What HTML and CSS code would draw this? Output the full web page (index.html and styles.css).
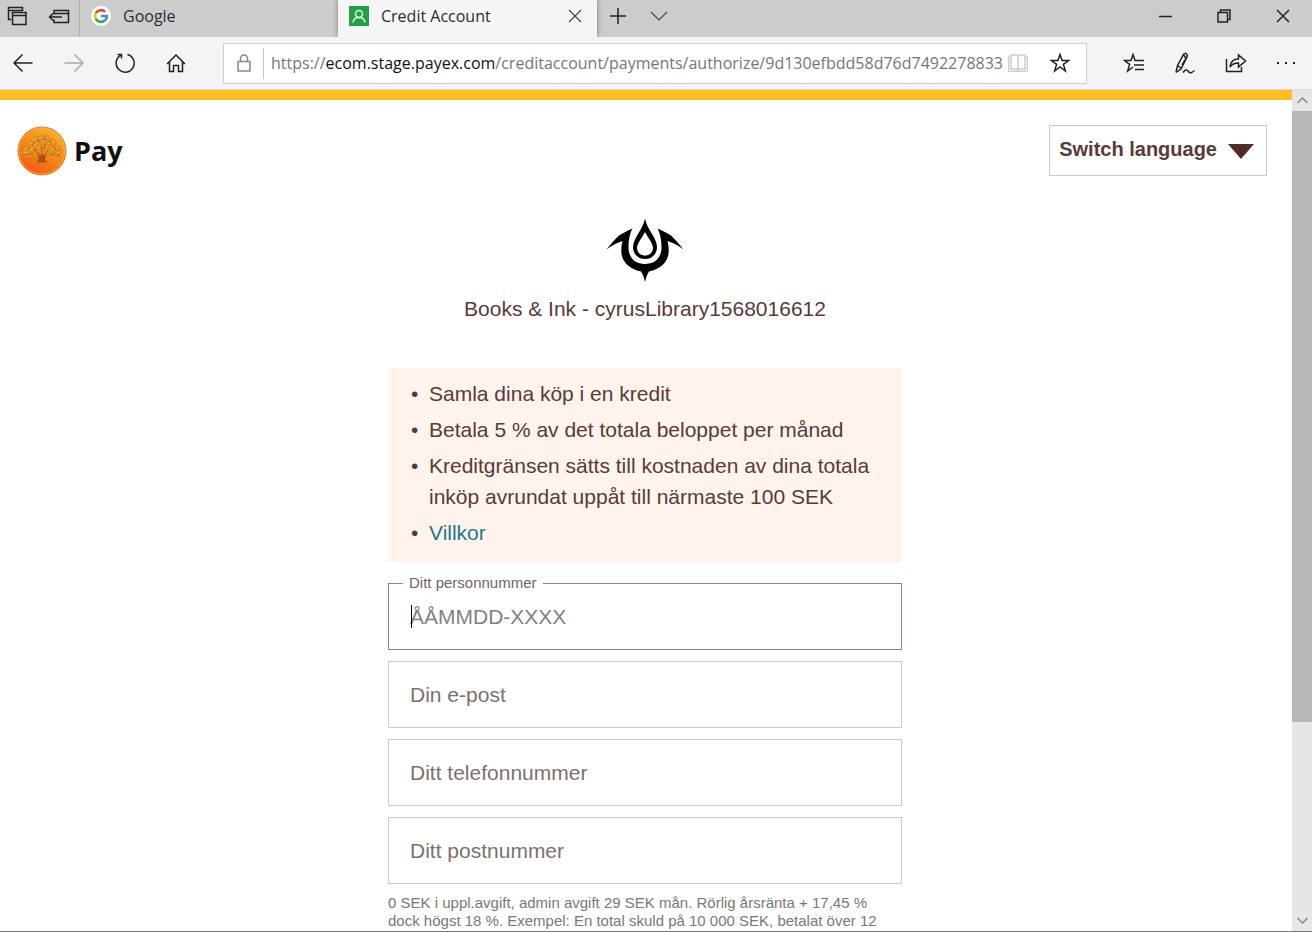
FILE: index.html
```html
<!DOCTYPE html>
<html lang="sv">
<head>
<meta charset="utf-8">
<meta name="viewport" content="width=device-width, initial-scale=1">
<title>Credit Account</title>
<link rel="stylesheet" href="styles.css">
</head>
<body>
<div class="browser">
  <header class="tabbar">
    <div class="tab-tools">
      <button class="icon-btn" aria-label="Tabs set aside"><svg width="20" height="20" viewBox="0 0 20 20"><path d="M4 13.500H1.500V1.500H15.500V5M1.500 4.500H15.500M5.500 6.500H19V18.500H5.500ZM5.500 9.500H19"/></svg></button>
      <button class="icon-btn" aria-label="Set tabs aside"><svg width="22" height="20" viewBox="0 0 22 20"><path d="M6 8.500V4.500H20.500V16.500H6V13.500M6 7.500H20.500M1.500 11H14M5 7.500L1.500 11L5 14.500"/></svg></button>
    </div>
    <button class="tab tab-idle">
      <svg class="favicon" width="20" height="20" viewBox="0 0 20 20"><circle cx="10" cy="10" r="10" class="g-disc"/><path class="g-red" d="M4.800 7.200A6 6 0 0 1 14.100 5.700"/><path class="g-yellow" d="M4.800 12.800A6 6 0 0 1 4.800 7.200"/><path class="g-green" d="M13.800 14.600A6 6 0 0 1 4.800 12.800"/><path class="g-blue" d="M10 10H16A6 6 0 0 1 13.800 14.600"/></svg>
      <span>Google</span>
    </button>
    <div class="tab tab-active">
      <svg class="favicon" width="20" height="20" viewBox="0 0 20 20"><rect width="20" height="20" class="fav-green"/><circle cx="10" cy="8" r="3.500" class="fav-line"/><path d="M4 16.500C4.500 12.800 6.500 11.500 10 11.500S15.500 12.800 16 16.500" class="fav-line"/></svg>
      <span class="tab-title">Credit Account</span>
      <button class="icon-btn" aria-label="Close tab"><svg width="14" height="14" viewBox="0 0 14 14"><path class="thin" d="M1 1L13 13M13 1L1 13"/></svg></button>
    </div>
    <button class="icon-btn new-tab" aria-label="New tab"><svg width="18" height="18" viewBox="0 0 18 18"><path d="M9 1V17M1 9H17"/></svg></button>
    <button class="icon-btn" aria-label="Tab previews"><svg width="18" height="18" viewBox="0 0 18 18"><path class="thin" d="M1 5L9 13L17 5"/></svg></button>
    <div class="window-controls">
      <button class="icon-btn" aria-label="Minimize"><svg width="14" height="14" viewBox="0 0 14 14"><path d="M1 7.500H14"/></svg></button>
      <button class="icon-btn" aria-label="Restore"><svg width="14" height="14" viewBox="0 0 14 14"><path d="M1 3.500H10.500V13H1ZM3.500 3.500V1H13V10.500H10.500"/></svg></button>
      <button class="icon-btn" aria-label="Close"><svg width="14" height="14" viewBox="0 0 14 14"><path d="M1 1L13 13M13 1L1 13"/></svg></button>
    </div>
  </header>

  <nav class="toolbar">
    <div class="nav-buttons">
      <button class="icon-btn" aria-label="Back"><svg width="20" height="20" viewBox="0 0 20 20"><path d="M19.500 10H1M9.500 1.500L1 10L9.500 18.500"/></svg></button>
      <button class="icon-btn" aria-label="Forward" disabled><svg width="20" height="20" viewBox="0 0 20 20"><path class="muted" d="M.5 10H19M10.500 1.500L19 10L10.500 18.500"/></svg></button>
      <button class="icon-btn" aria-label="Refresh"><svg width="20" height="20" viewBox="0 0 20 20"><path d="M12.500 1.500A9 9 0 1 1 6 2.200M2.500 1.500H6.500V5.500"/></svg></button>
      <button class="icon-btn" aria-label="Home"><svg width="20" height="20" viewBox="0 0 20 20"><path d="M1 11L10 2L19 11M3.500 9V18.500H7.500V12.500H12.500V18.500H16.500V9"/></svg></button>
    </div>
    <div class="address">
      <svg class="lock" width="14" height="18" viewBox="0 0 14 18"><path class="grey" d="M1 7.500H13V17H1ZM3.500 7.500V4.500A3.500 3.500 0 0 1 10.500 4.500V7.500"/></svg>
      <div class="url" role="textbox" aria-label="Address" tabindex="0">https://<b>ecom.stage.payex.com</b>/creditaccount/payments/authorize/9d130efbdd58d76d7492278833</div>
      <button class="icon-btn reading" aria-label="Reading view" disabled><svg width="20" height="18" viewBox="0 0 20 18"><path class="pale" d="M3 1H9L10 2L11 1H17V15H11L10 16L9 15H3ZM10 2V16M3 3H.5V17.500H19.500V3H17"/></svg></button>
      <button class="icon-btn" aria-label="Add to favorites"><svg width="20" height="20" viewBox="0 0 20 20"><path d="M10 1.500L12.100 7.500H18.700L13.400 11.400L15.400 18L10 14L4.600 18L6.600 11.400L1.300 7.500H7.900Z"/></svg></button>
    </div>
    <div class="actions">
      <button class="icon-btn" aria-label="Favorites"><svg width="22" height="20" viewBox="0 0 22 20"><path d="M13 7.500H12L10 1.500L8 7.500H1.500L6.600 11.400L4.600 18L10 14M12.500 7.500H21M11 12H21M12 16.500H21"/></svg></button>
      <button class="icon-btn" aria-label="Add notes"><svg width="22" height="22" viewBox="0 0 22 22"><path d="M2 20.500L3.500 13.500L9.500 2.500Q11 .5 12.500 2T12.500 6L7 17L2 20.500M3.500 13.500L7 16M9.500 2.500L12 6.500L8 13M9 20.500C11 17.500 13 17 14.500 19.500S18 20.500 20.500 18.500"/></svg></button>
      <button class="icon-btn" aria-label="Share"><svg width="22" height="20" viewBox="0 0 22 20"><path d="M1.500 6V18.500H16.500V14M5 14C5.500 8.500 9 6 13.500 6V2L20.500 8L13.500 14V10C9.500 10 7 11 5 14Z"/></svg></button>
      <button class="icon-btn" aria-label="Settings and more"><svg width="20" height="20" viewBox="0 0 20 20"><path class="dots" d="M1 9H3V11H1ZM9 9H11V11H9ZM17 9H19V11H17Z"/></svg></button>
    </div>
  </nav>

  <div class="viewport">
    <main class="page">
      <div class="page-head">
        <div class="brand">
          <svg width="50" height="50" viewBox="0 0 50 50" role="img" aria-label="Swedbank">
            <defs><linearGradient id="coin" x1=".8" y1="0" x2=".2" y2="1"><stop offset="0" stop-color="#f5b62c"/><stop offset=".45" stop-color="#f68d1c"/><stop offset="1" stop-color="#f25312"/></linearGradient></defs>
            <circle cx="25" cy="25" r="24" fill="url(#coin)" stroke="#e8702a"/>
            <circle cx="25" cy="25" r="23" fill="none" stroke="#fdb33c" stroke-width=".8"/>
            <path class="oak" d="M4 28C4 24 7 22 9 21C9 17 11 15 14 15C15 11 19 9 23 10C27 7 32 9 34 12C38 12 40 16 40 19C44 20 46 24 44 28C43 31 38 31 35 30C32 32 30 31 28 30C28 32 29 34 31 36H18C21 34 22 32 21 30C18 32 15 31 14 30C10 32 5 31 4 28Z"/>
            <path class="oak-light" d="M8 23L11 22M12 18L15 17M16 14L19 13M22 12L25 11M29 11L32 12M35 15L37 17M17 19L20 17M24 16L27 15M31 17L34 18M38 21L41 22M21 22L24 20M28 21L31 20M13 24L16 22M34 24L37 23M7 27L10 26M40 27L43 26"/>
            <path class="oak-dark" d="M6 29L10 28M12 29L16 27M10 24L13 21M15 20L18 16M20 15L23 14M26 13L29 14M32 15L35 19M37 20L39 24M18 25L21 27L24 29M31 25L28 28L26 30M24 20L25 26M33 29L38 28M40 30L43 29M29 18L27 23M16 23L20 24"/>
            <path class="oak-trunk" d="M19 36.500C22 34 23 32 20 28L24 30L25 25L26 30L30 28C27 32 28 34 31 36.500Z"/>
          </svg>
          <span>Pay</span>
        </div>
        <button class="language">Switch language <span class="triangle"></span></button>
      </div>

      <section class="checkout">
        <div class="merchant">
          <svg width="78" height="66" viewBox="0 0 78 66" aria-hidden="true">
            <path fill-rule="evenodd" d="M39 0.500C40 6 43 11 46 16C49 21 51 25 51 29C51 36 46 41 39 41S27 36 27 29C27 25 29 21 32 16C35 11 38 6 39 0.500ZM39 14C37 18 34.500 21 33 24C31.500 27 31 28 31 30C31 34.500 34.500 37.500 39 37.500S47 34.500 47 30C47 28 46.500 27 45 24C43.500 21 41 18 39 14Z"/>
            <path d="M26.500 10.500C21 13 17 15 13 17.500C9 21 5 26 0.500 31.500C5 28 10 25 16.500 23C15.500 27 15 31 15.500 36C17 45 24 51 35 53.500C37 56 38 60 39 64C40 60 41 56 43 53.500C54 51 61 45 62.500 36C63 31 62.500 27 61.500 23C68 25 73 28 77.500 31.500C73 26 69 21 65 17.500C61 15 57 13 51.500 10.500C54 15 55.500 22 55.500 29C55.500 40 49 46 39 46S22.500 40 22.500 29C22.500 22 24 15 26.500 10.500Z"/>
          </svg>
          <p>Books &amp; Ink - cyrusLibrary1568016612</p>
        </div>

        <ul class="terms">
          <li>Samla dina köp i en kredit</li>
          <li>Betala 5 % av det totala beloppet per månad</li>
          <li>Kreditgränsen sätts till kostnaden av dina totala inköp avrundat uppåt till närmaste 100 SEK</li>
          <li><a href="#villkor">Villkor</a></li>
        </ul>

        <form class="fields">
          <div class="field field-focus">
            <label for="ssn">Ditt personnummer</label>
            <input id="ssn" type="text" placeholder="ÅÅMMDD-XXXX">
          </div>
          <div class="field"><input type="email" aria-label="Din e-post" placeholder="Din e-post"></div>
          <div class="field"><input type="tel" aria-label="Ditt telefonnummer" placeholder="Ditt telefonnummer"></div>
          <div class="field"><input type="text" aria-label="Ditt postnummer" placeholder="Ditt postnummer"></div>
        </form>
        <p class="fine-print">0 SEK i uppl.avgift, admin avgift 29 SEK mån. Rörlig årsränta + 17,45 % dock högst 18 %. Exempel: En total skuld på 10 000 SEK, betalat över 12 månader</p>
      </section>
    </main>
    <div class="scrollbar" aria-hidden="true">
      <svg width="20" height="21" viewBox="0 0 20 21"><path class="arrow" d="M5.500 13L10.500 8L15.500 13"/></svg>
      <div class="thumb"></div>
      <div class="track"></div>
      <svg width="20" height="20" viewBox="0 0 20 20"><path class="arrow" d="M5.500 7L10.500 12L15.500 7"/></svg>
    </div>
  </div>
</div>
</body>
</html>
```

FILE: styles.css
```css
* { box-sizing: border-box; }
body { margin: 0; }
button { font: inherit; color: inherit; background: none; border: 0; padding: 0; }
svg { display: block; flex: none; }
p { margin: 0; }

.browser {
  display: flex;
  flex-direction: column;
  height: 100vh;
  overflow: hidden;
  border-bottom: 1px solid #777;
  background: #fff;
  font-family: "Open Sans", "Noto Sans", sans-serif;
  font-size: 16px;
  color: #2c2c2c;
}

.icon-btn { display: flex; align-items: center; justify-content: center; flex: none; }
.icon-btn path, .lock path { fill: none; stroke: #222; stroke-width: 1.5; }
.icon-btn .thin { stroke: #444; stroke-width: 1.2; }
.icon-btn .muted { stroke: #aaa; }
.icon-btn .pale { stroke: #ccc; }
.icon-btn .dots { fill: #222; stroke: none; }
.lock .grey { stroke: #888; }

.tabbar { display: flex; align-items: stretch; flex: none; height: 37px; background: #ccc; padding-bottom: 5px; }
.tab-tools { display: flex; gap: 21px; width: 80px; margin-bottom: -5px; padding: 0 0 5px 7px; border-right: 1px solid #b0afb0; }
.tab { display: flex; align-items: center; gap: 12px; text-align: left; }
.tab-idle { width: 258px; padding-left: 11px; }
.tab-active { width: 259px; margin-bottom: -5px; padding: 0 15px 5px 11px; background: #f5f5f6; box-shadow: 0 0 5px #777; clip-path: inset(0 -6px 0 -6px); }
.tab-title { flex: 1; }
.g-disc { fill: #fff; }
.g-red, .g-yellow, .g-green, .g-blue { fill: none; stroke-width: 2.6; }
.g-red { stroke: #ea4335; }
.g-yellow { stroke: #fbbc05; }
.g-green { stroke: #34a853; }
.g-blue { stroke: #4285f4; }
.fav-green { fill: #22a047; }
.fav-line { fill: none; stroke: #e6f7ea; stroke-width: 1.5; }
.new-tab { margin: 0 23px 0 12px; }
.window-controls { display: flex; gap: 45px; margin-left: auto; padding-right: 22px; }

.toolbar { display: flex; align-items: center; flex: none; height: 53px; background: #f4f3f5; border-bottom: 1px solid #dcdadd; }
.nav-buttons { display: flex; gap: 31px; padding-left: 13px; }
.address { display: flex; align-items: center; flex: 1; min-width: 0; height: 41px; margin-left: 37px; padding: 0 16px 0 13px; background: #fff; border: 1px solid #d0cfd2; }
.url { flex: 1; min-width: 0; height: 31px; margin-left: 12px; padding-left: 7px; border-left: 1px solid #c4c4c6; line-height: 30px; white-space: nowrap; overflow: hidden; color: #777; }
.url b { font-weight: 400; color: #111; }
.reading { margin: 0 22px 0 4px; }
.actions { display: flex; gap: 29px; padding: 0 16px 0 36px; }

.viewport { display: flex; flex: 1; min-height: 0; }
.page { flex: 1; min-width: 0; overflow: hidden; border-top: 10px solid #ffbf24; font-family: "Liberation Sans", Arial, sans-serif; font-size: 21px; color: #5a3a39; }
.page-head { display: flex; justify-content: space-between; align-items: center; padding: 25px 25px 0 17px; }
.brand { display: flex; align-items: center; gap: 7px; font-family: "Open Sans", "Noto Sans", sans-serif; font-size: 27px; font-weight: 700; color: #111; }
.oak { fill: #e08a20; }
.oak-light { fill: none; stroke: #f2b840; stroke-width: 1.3; }
.oak-dark { fill: none; stroke: #b8621a; stroke-width: 1; }
.oak-trunk { fill: #ad4f14; }
.language { display: flex; align-items: center; gap: 11px; height: 51px; padding: 0 12px 2px 9px; border: 1px solid #d0c8c8; font-size: 20px; font-weight: 700; }
.triangle { margin-top: 3px; border: 13px solid transparent; border-top: 15px solid #512b2b; border-bottom: 0; }

.checkout { width: 516px; max-width: 100%; margin: 0 auto; padding-right: 2px; }
.merchant { display: flex; flex-direction: column; align-items: center; padding-top: 42px; }
.merchant p { margin-top: 9px; line-height: 31px; }
.terms { margin: 44px 0 0; padding: 10px 17px 9px 41px; background: #fef3ed; line-height: 31px; list-style: none; }
.terms li { margin-bottom: 5px; }
.terms li::before { content: "•"; float: left; margin-left: -18px; }
.terms a { color: #257886; text-decoration: none; }

.fields { display: grid; gap: 11px; margin-top: 21px; }
.field { position: relative; }
.field input { display: block; width: 100%; height: 67px; padding: 0 21px; border: 1px solid #d2c9c9; border-radius: 0; background: #fff; font: inherit; color: #512b2b; outline: 0; }
.field input::placeholder { color: #7d706f; opacity: 1; }
.field-focus input { border-color: #968282; }
.field-focus input::placeholder { color: #828282; }
.field label { position: absolute; top: -10px; left: 15px; padding: 0 6px; background: #fff; font-size: 15px; line-height: 20px; color: #746464; }
.field-focus::after { content: ""; position: absolute; top: 22px; left: 23px; width: 1px; height: 23px; background: #000; }
.fine-print { margin-top: 10px; font-size: 15px; line-height: 18px; color: #7c7777; }

.scrollbar { display: flex; flex-direction: column; flex: none; width: 20px; background: #e7e5e8; }
.thumb { flex: 612; background: #b8b8b8; }
.track { flex: 189; }
.arrow { fill: none; stroke: #888; stroke-width: 1.5; }
```
